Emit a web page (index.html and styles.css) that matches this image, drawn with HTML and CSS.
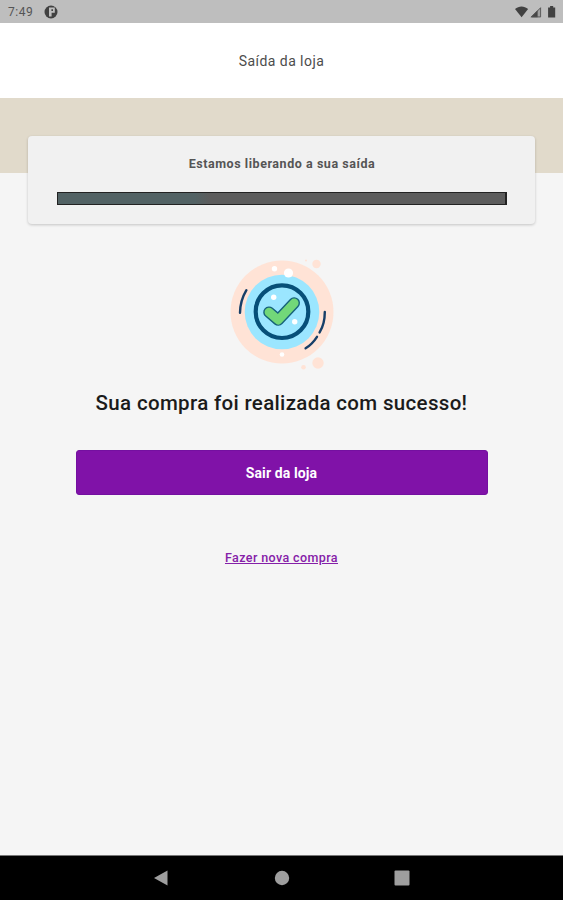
FILE: index.html
```html
<!DOCTYPE html>
<html lang="pt-BR">
<head>
  <meta charset="UTF-8">
  <title>Saída da loja</title>
  <meta name="viewport" content="width=device-width, initial-scale=1.0">
  <link rel="stylesheet" href="styles.css">
</head>
<body>
  <div class="status-bar">
    <span class="clock">7:49</span>
    <svg class="app-icon" width="14" height="14" viewBox="0 0 14 14">
      <circle cx="7" cy="7" r="6.5" fill="#414141"/>
      <path d="M5 2.6h5.8v5.2H7.6v3.8H5z" fill="#bebebe"/>
      <path d="M7.4 4.3h1.6v1.8H7.4z" fill="#414141"/>
    </svg>
    <svg class="status-icons" width="43" height="14" viewBox="0 0 43 14">
      <path d="M1 4.1C4.9.7 10.2.7 14.1 4.1L7.6 12.2z" fill="#414141"/>
      <path d="M16.5 12.3 27 1.8v10.5z" fill="#a0a0a0"/>
      <path d="M16.5 12.3 23.6 5.2v7.1z" fill="#464646"/>
      <path d="M17.5 11.9 26.6 2.8v9.1z" fill="none" stroke="#555" stroke-width=".9"/>
      <path d="M34.1 2.4h2V1.1h3.1v1.3h2v10.1h-7.1z" fill="#414141"/>
    </svg>
  </div>

  <header class="header">Saída da loja</header>
  <div class="band"></div>

  <main class="content">
    <section class="card">
      <p class="card-title">Estamos liberando a sua saída</p>
      <div class="progress">
        <div class="progress-fill" style="width: 34%"></div>
      </div>
    </section>

    <svg class="success" width="125" height="125" viewBox="0 0 125 125">
      <g fill="#ffe3d6">
        <circle cx="62" cy="62" r="51.5"/>
        <circle cx="96.5" cy="14" r="4.2"/>
        <circle cx="98" cy="113" r="5.7"/>
        <circle cx="83.5" cy="117.3" r="2.3"/>
        <circle cx="86" cy="10.5" r="1"/>
      </g>
      <circle cx="62" cy="62" r="37.3" fill="#9be6ff"/>
      <circle cx="62" cy="61.7" r="26.3" fill="#9be6ff" stroke="#064f78" stroke-width="4.2"/>
      <g fill="#fff">
        <circle cx="54.5" cy="18.7" r="2.7"/>
        <circle cx="68.5" cy="23" r="4.6"/>
        <circle cx="53.7" cy="47.2" r="2.7"/>
        <circle cx="74.7" cy="71.7" r="2.7"/>
        <circle cx="62" cy="104.5" r="2.3"/>
      </g>
      <path class="check" d="M49 62.2 58.2 70 74.2 53" stroke="#16637a" stroke-width="11.6"/>
      <path class="check" d="M49 62.2 58.2 70 74.2 53" stroke="#72d879" stroke-width="8.8"/>
      <g fill="none" stroke="#173f68" stroke-width="2.4" stroke-linecap="round">
        <path d="M26.4 40.2Q20.2 50.5 20 62.8"/>
        <path d="M104.8 62Q104.8 74 99.6 82.4"/>
        <path d="M97 86.8Q92.2 94.2 85.6 98.3"/>
      </g>
    </svg>

    <h1 class="message">Sua compra foi realizada com sucesso!</h1>
    <button class="exit-button">Sair da loja</button>
    <a class="new-purchase" href="#">Fazer nova compra</a>
  </main>

  <nav class="nav-bar">
    <svg width="16" height="16" viewBox="0 0 16 16"><path d="M0 8 13.5.5v15z"/></svg>
    <svg width="16" height="16" viewBox="0 0 16 16"><circle cx="8" cy="8" r="7.2"/></svg>
    <svg width="16" height="16" viewBox="0 0 16 16"><rect x=".5" y=".5" width="15" height="15" rx="1"/></svg>
  </nav>
</body>
</html>
```
FILE: styles.css
```css
* {
  box-sizing: border-box;
}
body {
  display: flex;
  flex-direction: column;
  height: 900px;
  margin: 0;
  overflow: hidden;
  background: #f5f5f5;
  font-family: Roboto, sans-serif;
}
.status-bar {
  display: flex;
  align-items: center;
  height: 23px;
  padding: 0 6px 0 8px;
  background: #bebebe;
}
.clock {
  width: 36px;
  padding-top: 1px;
  color: #555;
  font-size: 12px;
  letter-spacing: 0.5px;
}
.status-icons {
  margin-left: auto;
}
.header {
  display: flex;
  align-items: center;
  justify-content: center;
  height: 75px;
  background: #fff;
  color: #4c4c4c;
  font-size: 14px;
  letter-spacing: 0.45px;
}
.band {
  height: 75px;
  background: #e1dacb;
}
.content {
  display: flex;
  flex: 1;
  flex-direction: column;
  align-items: center;
  margin-top: -37px;
}
.card {
  width: 507px;
  height: 88px;
  padding: 20px 28px 0 29px;
  border-radius: 4px;
  background: #f1f1f1;
  box-shadow: 0 1px 3px rgba(0, 0, 0, 0.2);
}
.card-title {
  margin: 0 0 20px;
  color: #555;
  font-size: 12.5px;
  font-weight: 700;
  line-height: 16px;
  letter-spacing: 0.55px;
  text-align: center;
}
.progress {
  height: 13px;
  border: 1px solid #222;
  border-width: 1px 2px 1px 1px;
  background: #5c5c5c;
}
.progress-fill {
  height: 100%;
  background: linear-gradient(90deg, #526264 90%, #5c5c5c);
}
.success {
  margin: 26px 0 0 1px;
}
.check {
  fill: none;
  stroke-linecap: round;
  stroke-linejoin: round;
}
.message {
  margin: 14px 0 0;
  color: #1b1b1b;
  font-size: 20.5px;
  font-weight: 500;
  line-height: 28px;
  letter-spacing: 0.33px;
}
.exit-button {
  width: 412px;
  height: 45px;
  margin-top: 33px;
  border: 1px solid #7410a0;
  border-radius: 3px;
  background: #8012a8;
  color: #fff;
  font-family: inherit;
  font-size: 14px;
  font-weight: 700;
  letter-spacing: 0.12px;
}
.new-purchase {
  margin-top: 55px;
  color: #8520a8;
  font-size: 12.5px;
  font-weight: 500;
  line-height: 16px;
  letter-spacing: 0.4px;
}
.nav-bar {
  display: flex;
  align-items: center;
  justify-content: center;
  gap: 104px;
  height: 45px;
  border-top: 1px solid #777;
  background: #000;
  fill: #9e9e9e;
}
```
